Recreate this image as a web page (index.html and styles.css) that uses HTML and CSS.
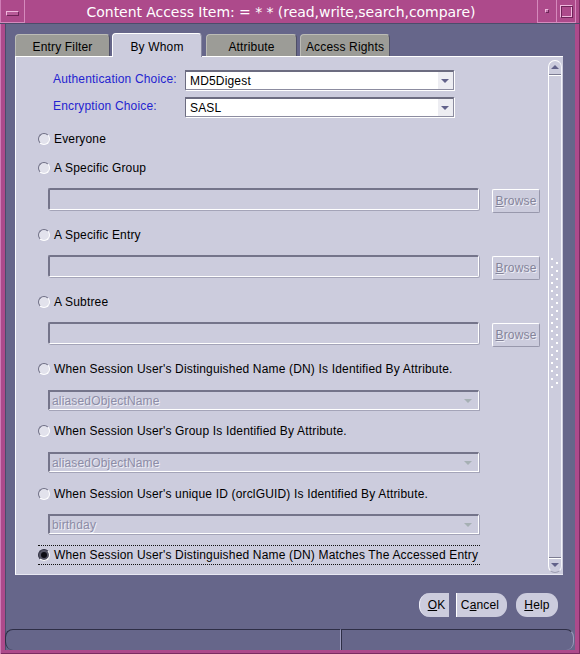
FILE: index.html
```html
<!DOCTYPE html>
<html>
<head>
<meta charset="utf-8">
<title>Content Access Item</title>
<link rel="stylesheet" href="styles.css">
</head>
<body>
<div class="window">
  <div class="titlebar">
    <div class="tb-menu"><span class="tb-minus"></span></div>
    <div class="tb-title">Content Access Item: = * * (read,write,search,compare)</div>
    <div class="tb-btn"><span class="tb-dot"></span></div>
    <div class="tb-btn tb-last"><span class="tb-square"></span></div>
  </div>
  <div class="frame">
    <div class="main">
      <div class="tabs">
        <div class="tab t1">Entry Filter</div>
        <div class="tab t2 active">By Whom</div>
        <div class="tab t3">Attribute</div>
        <div class="tab t4">Access Rights</div>
      </div>
      <div class="panel">
        <div class="content">
          <div class="choice-row first">
            <div class="choice-label">Authentication Choice:</div>
            <div class="combo"><span class="combo-text">MD5Digest</span><span class="combo-btn"><span class="arrow"></span></span></div>
          </div>
          <div class="choice-row second">
            <div class="choice-label">Encryption Choice:</div>
            <div class="combo"><span class="combo-text">SASL</span><span class="combo-btn"><span class="arrow"></span></span></div>
          </div>

          <div class="radio-row r-everyone"><span class="radio"></span><span class="radio-label">Everyone</span></div>
          <div class="radio-row r-gap13"><span class="radio"></span><span class="radio-label">A Specific Group</span></div>
          <div class="field-row"><div class="field"></div><div class="browse"><u>B</u>rowse</div></div>

          <div class="radio-row r-gap14"><span class="radio"></span><span class="radio-label">A Specific Entry</span></div>
          <div class="field-row"><div class="field"></div><div class="browse"><u>B</u>rowse</div></div>

          <div class="radio-row r-gap14"><span class="radio"></span><span class="radio-label">A Subtree</span></div>
          <div class="field-row"><div class="field"></div><div class="browse"><u>B</u>rowse</div></div>

          <div class="radio-row r-gap14"><span class="radio"></span><span class="radio-label">When Session User's Distinguished Name (DN) Is Identified By Attribute.</span></div>
          <div class="dcombo g13"><span class="dcombo-text">aliasedObjectName</span><span class="darrow"></span></div>

          <div class="radio-row r-gap13"><span class="radio"></span><span class="radio-label">When Session User's Group Is Identified By Attribute.</span></div>
          <div class="dcombo g13"><span class="dcombo-text">aliasedObjectName</span><span class="darrow"></span></div>

          <div class="radio-row r-gap14"><span class="radio"></span><span class="radio-label">When Session User's unique ID (orclGUID) Is Identified By Attribute.</span></div>
          <div class="dcombo g12"><span class="dcombo-text">birthday</span><span class="darrow"></span></div>

          <div class="radio-row focused"><span class="radio checked"></span><span class="radio-label">When Session User's Distinguished Name (DN) Matches The Accessed Entry</span></div>
        </div>
        <div class="scrollbar">
          <div class="sb-up"><span class="sb-tri-up"></span></div>
          <div class="sb-track"><div class="sb-grip"></div></div>
          <div class="sb-down"><span class="sb-tri-down"></span></div>
        </div>
      </div>
      <div class="buttons">
        <div class="btn btn-ok"><u>O</u>K</div>
        <div class="btn btn-cancel">C<u>a</u>ncel</div>
        <div class="btn btn-help"><u>H</u>elp</div>
      </div>
    </div>
    <div class="statusbar">
      <div class="pane pane1"></div>
      <div class="pane pane2"></div>
    </div>
  </div>
</div>
</body>
</html>
```

FILE: styles.css
```css
* { box-sizing: border-box; }
html, body { margin: 0; padding: 0; }
body {
  width: 580px;
  height: 654px;
  overflow: hidden;
  background: #66668a;
  font-family: "Liberation Sans", Arial, sans-serif;
  font-size: 12px;
  letter-spacing: 0.17px;
  color: #000;
}
.window {
  width: 580px;
  height: 654px;
  display: flex;
  flex-direction: column;
  background: #ad4a8b;
  box-shadow: inset 1px 0 0 #cf7cb6, inset -1px 0 0 #7a2c62, inset 0 -1px 0 #7a2c62;
}

/* title bar */
.titlebar {
  height: 24px;
  display: flex;
  color: #fff;
  border-bottom: 1px solid #4c4c6a;
}
.tb-menu {
  width: 25px;
  border-right: 1px solid #d58abd;
  border-bottom: 1px solid #d58abd;
  display: flex;
  align-items: center;
  justify-content: center;
  padding-top: 5px;
}
.tb-minus {
  width: 13px;
  height: 5px;
  background: #b85a98;
  border-top: 1px solid #f0b8de;
  border-left: 1px solid #f0b8de;
  border-bottom: 1px solid #6e2458;
  border-right: 1px solid #6e2458;
}
.tb-title {
  flex: 1;
  text-align: center;
  font-family: "DejaVu Sans", sans-serif;
  font-size: 14px;
  letter-spacing: -0.05px;
  line-height: 25px;
  white-space: nowrap;
}
.tb-btn {
  width: 19px;
  border-left: 1px solid #d58abd;
  border-bottom: 1px solid #d58abd;
  display: flex;
  align-items: center;
  justify-content: center;
}
.tb-last { width: 20px; border-right: 1px solid #d58abd; margin-right: 4px; }
.tb-dot {
  width: 4px;
  height: 4px;
  background: #c070a8;
  border-top: 1px solid #f0b8de;
  border-left: 1px solid #f0b8de;
  border-bottom: 1px solid #6e2458;
  border-right: 1px solid #6e2458;
}
.tb-square {
  width: 13px;
  height: 13px;
  border-top: 1px solid #f0b8de;
  border-left: 1px solid #f0b8de;
  border-bottom: 1px solid #6e2458;
  border-right: 1px solid #6e2458;
  box-shadow: inset 1px 1px 0 #6e2458, inset -1px -1px 0 #f0b8de;
}

/* frame */
.frame {
  flex: 1;
  margin: 0 5px 4px 5px;
  background: #66668a;
  display: flex;
  flex-direction: column;
  box-shadow: inset 1px 0 0 #4c4c6a;
}
.main {
  flex: 1;
  padding: 9px 12px 0 10px;
  display: flex;
  flex-direction: column;
}

/* tabs */
.tabs {
  height: 23px;
  display: flex;
  align-items: flex-end;
  position: relative;
  z-index: 2;
}
.tab {
  height: 22px;
  background: #9c9c97;
  border-top: 1px solid #bcbcb6;
  border-left: 1px solid #bcbcb6;
  border-right: 1px solid #4e4e66;
  border-radius: 4px 4px 0 0;
  display: flex;
  align-items: center;
  justify-content: center;
  padding-top: 2px;
}
.t1 { width: 95px; }
.t2 { width: 90px; margin-left: 2px; }
.t3 { width: 91px; margin-left: 4px; }
.t4 { width: 90px; margin-left: 3px; }
.tab.active {
  height: 24px;
  margin-bottom: -1px;
  background: #ccccdd;
  border-top: 1px solid #fff;
  border-left: 1px solid #fff;
  border-right: 1px solid #8888a0;
  padding-top: 2px;
}

/* panel */
.panel {
  height: 519px;
  width: 548px;
  background: #ccccdd;
  border-top: 1px solid #fff;
  border-left: 1px solid #fff;
  border-bottom: 1px solid #e8e8f2;
  display: flex;
  position: relative;
  z-index: 1;
}
.content {
  flex: 1;
  display: flex;
  flex-direction: column;
  padding-top: 13px;
}
.choice-row {
  height: 20px;
  display: flex;
  align-items: center;
  padding-left: 37px;
}
.choice-row.second { margin-top: 7px; }
.choice-label {
  width: 132px;
  color: #2424d0;
  margin-top: -3px;
}
.combo {
  width: 269px;
  height: 20px;
  background: #fff;
  border-top: 2px solid #6c6c80;
  border-left: 1px solid #6c6c80;
  border-right: 1px solid #8c8ca0;
  border-bottom: 1px solid #8c8ca0;
  box-shadow: 1px 1px 0 #fff;
  display: flex;
  align-items: center;
}
.combo-text { flex: 1; padding-left: 4px; padding-top: 1px; }
.combo-btn {
  width: 15px;
  height: 100%;
  background: #ededf2;
  display: flex;
  align-items: center;
  justify-content: center;
}
.arrow {
  width: 0; height: 0;
  border-left: 4px solid transparent;
  border-right: 4px solid transparent;
  border-top: 4px solid #62628a;
  margin-left: -2px;
}

.radio-row {
  height: 16px;
  display: flex;
  align-items: center;
  padding-left: 22px;
}
.r-everyone { margin-top: 14px; }
.r-gap13 { margin-top: 13px; }
.r-gap14 { margin-top: 14px; }
.radio {
  width: 12px;
  height: 12px;
  flex: none;
  border-radius: 50%;
  background: #e2e2ec;
  border: 1px solid;
  border-color: #6e6e84 #ffffff #ffffff #6e6e84;
  position: relative;
}
.radio.checked { background: #555566; border-color: #333344 #ffffff #ffffff #333344; }
.radio.checked::after {
  content: "";
  position: absolute;
  left: 2px; top: 2px;
  width: 6px; height: 6px;
  border-radius: 50%;
  background: #0c0c14;
}
.radio-label { margin-left: 4px; white-space: nowrap; }
.radio-row.focused {
  margin-top: 11px;
  margin-left: 22px;
  padding-left: 0;
  width: 442px;
  height: 20px;
  border-top: 1px dotted #111;
  border-bottom: 1px dotted #111;
}

.field-row {
  display: flex;
  align-items: flex-start;
  margin-top: 12px;
  padding-left: 32px;
}
.field {
  width: 431px;
  height: 22px;
  border-top: 2px solid #74748a;
  border-left: 2px solid #74748a;
  border-right: 1px solid #fff;
  border-bottom: 1px solid #fff;
  border-radius: 2px;
  box-shadow: 1px 1px 0 #a4a4b8;
}
.browse {
  width: 48px;
  height: 24px;
  margin-left: 13px;
  margin-top: 1px;
  border: 1px solid;
  border-color: #fff #9898ac #9898ac #fff;
  border-radius: 2px;
  color: #84849a;
  display: flex;
  align-items: center;
  justify-content: center;
  text-shadow: 1px 1px 0 #eeeef6;
}

.dcombo {
  width: 431px;
  height: 20px;
  margin-left: 32px;
  border-top: 2px solid #74748a;
  border-left: 2px solid #74748a;
  border-right: 1px solid #fff;
  border-bottom: 1px solid #fff;
  box-shadow: 1px 1px 0 #a4a4b8;
  display: flex;
  align-items: center;
}
.g13 { margin-top: 13px; }
.g12 { margin-top: 12px; }
.dcombo-text {
  flex: 1;
  padding-left: 2px;
  color: #8c8ca6;
  text-shadow: 1px 1px 0 #eeeef6;
}
.darrow {
  width: 0; height: 0;
  border-left: 4px solid transparent;
  border-right: 4px solid transparent;
  border-top: 4px solid #a6b0b4;
  margin-right: 6px;
}

/* scrollbar */
.scrollbar {
  width: 14px;
  margin: 3px 1px 1px 0;
  display: flex;
  flex-direction: column;
  border-left: 1px solid #fff;
  border-right: 1px solid #f4f4fa;
  border-radius: 7px;
  border-top: 1px solid #fff;
  border-bottom: 1px solid #9c9cb0;
}
.sb-up {
  height: 14px;
  border-bottom: 1px solid #7c7c92;
  box-shadow: 0 1px 0 #fff;
  display: flex;
  justify-content: center;
  padding-top: 4px;
}
.sb-tri-up {
  width: 0; height: 0;
  border-left: 4px solid transparent;
  border-right: 4px solid transparent;
  border-bottom: 4px solid #62628a;
}
.sb-track {
  flex: 1;
  display: flex;
  align-items: center;
  justify-content: center;
  padding-top: 14px;
}
.sb-grip {
  width: 8px;
  height: 130px;
  background:
    radial-gradient(circle at 1px 1px, #ffffff 0 1px, transparent 1.2px) 0 0 / 8px 8px,
    radial-gradient(circle at 1px 1px, #ffffff 0 1px, transparent 1.2px) 5px 4px / 8px 8px;
  background-repeat: repeat;
}
.sb-down {
  height: 15px;
  border-top: 1px solid #7c7c92;
  box-shadow: inset 0 1px 0 #fff;
  display: flex;
  justify-content: center;
  padding-top: 5px;
}
.sb-tri-down {
  width: 0; height: 0;
  border-left: 4px solid transparent;
  border-right: 4px solid transparent;
  border-top: 4px solid #62628a;
}

/* buttons */
.buttons {
  margin-top: 18px;
  height: 24px;
  display: flex;
  justify-content: flex-end;
  padding-right: 5px;
}
.btn {
  height: 24px;
  background: #ccccdd;
  display: flex;
  align-items: center;
  justify-content: center;
  color: #000;
}
.btn-ok {
  width: 30px;
  border-radius: 11px 0 0 11px;
  padding-left: 4px;
  border-left: 1px solid #eeeef8;
}
.btn-cancel {
  width: 51px;
  margin-left: 7px;
  border-radius: 0 11px 11px 0;
  border-left: 1px solid #ffffff;
  padding-right: 4px;
}
.btn-help {
  width: 42px;
  margin-left: 9px;
  border-radius: 11px;
}

/* status bar */
.statusbar {
  height: 21px;
  margin-top: 12px;
  display: flex;
  padding-right: 1px;
}
.pane {
  height: 21px;
  border-top: 1px solid #2e2e46;
}
.pane1 {
  width: 336px;
  border-left: 1px solid #2e2e46;
  border-right: 1px solid #9a9abc;
  border-radius: 8px 0 0 8px;
}
.pane2 {
  flex: 1;
  border-left: 1px solid #2e2e46;
  border-right: 1px solid #9a9abc;
  border-radius: 0 8px 8px 0;
}
```
